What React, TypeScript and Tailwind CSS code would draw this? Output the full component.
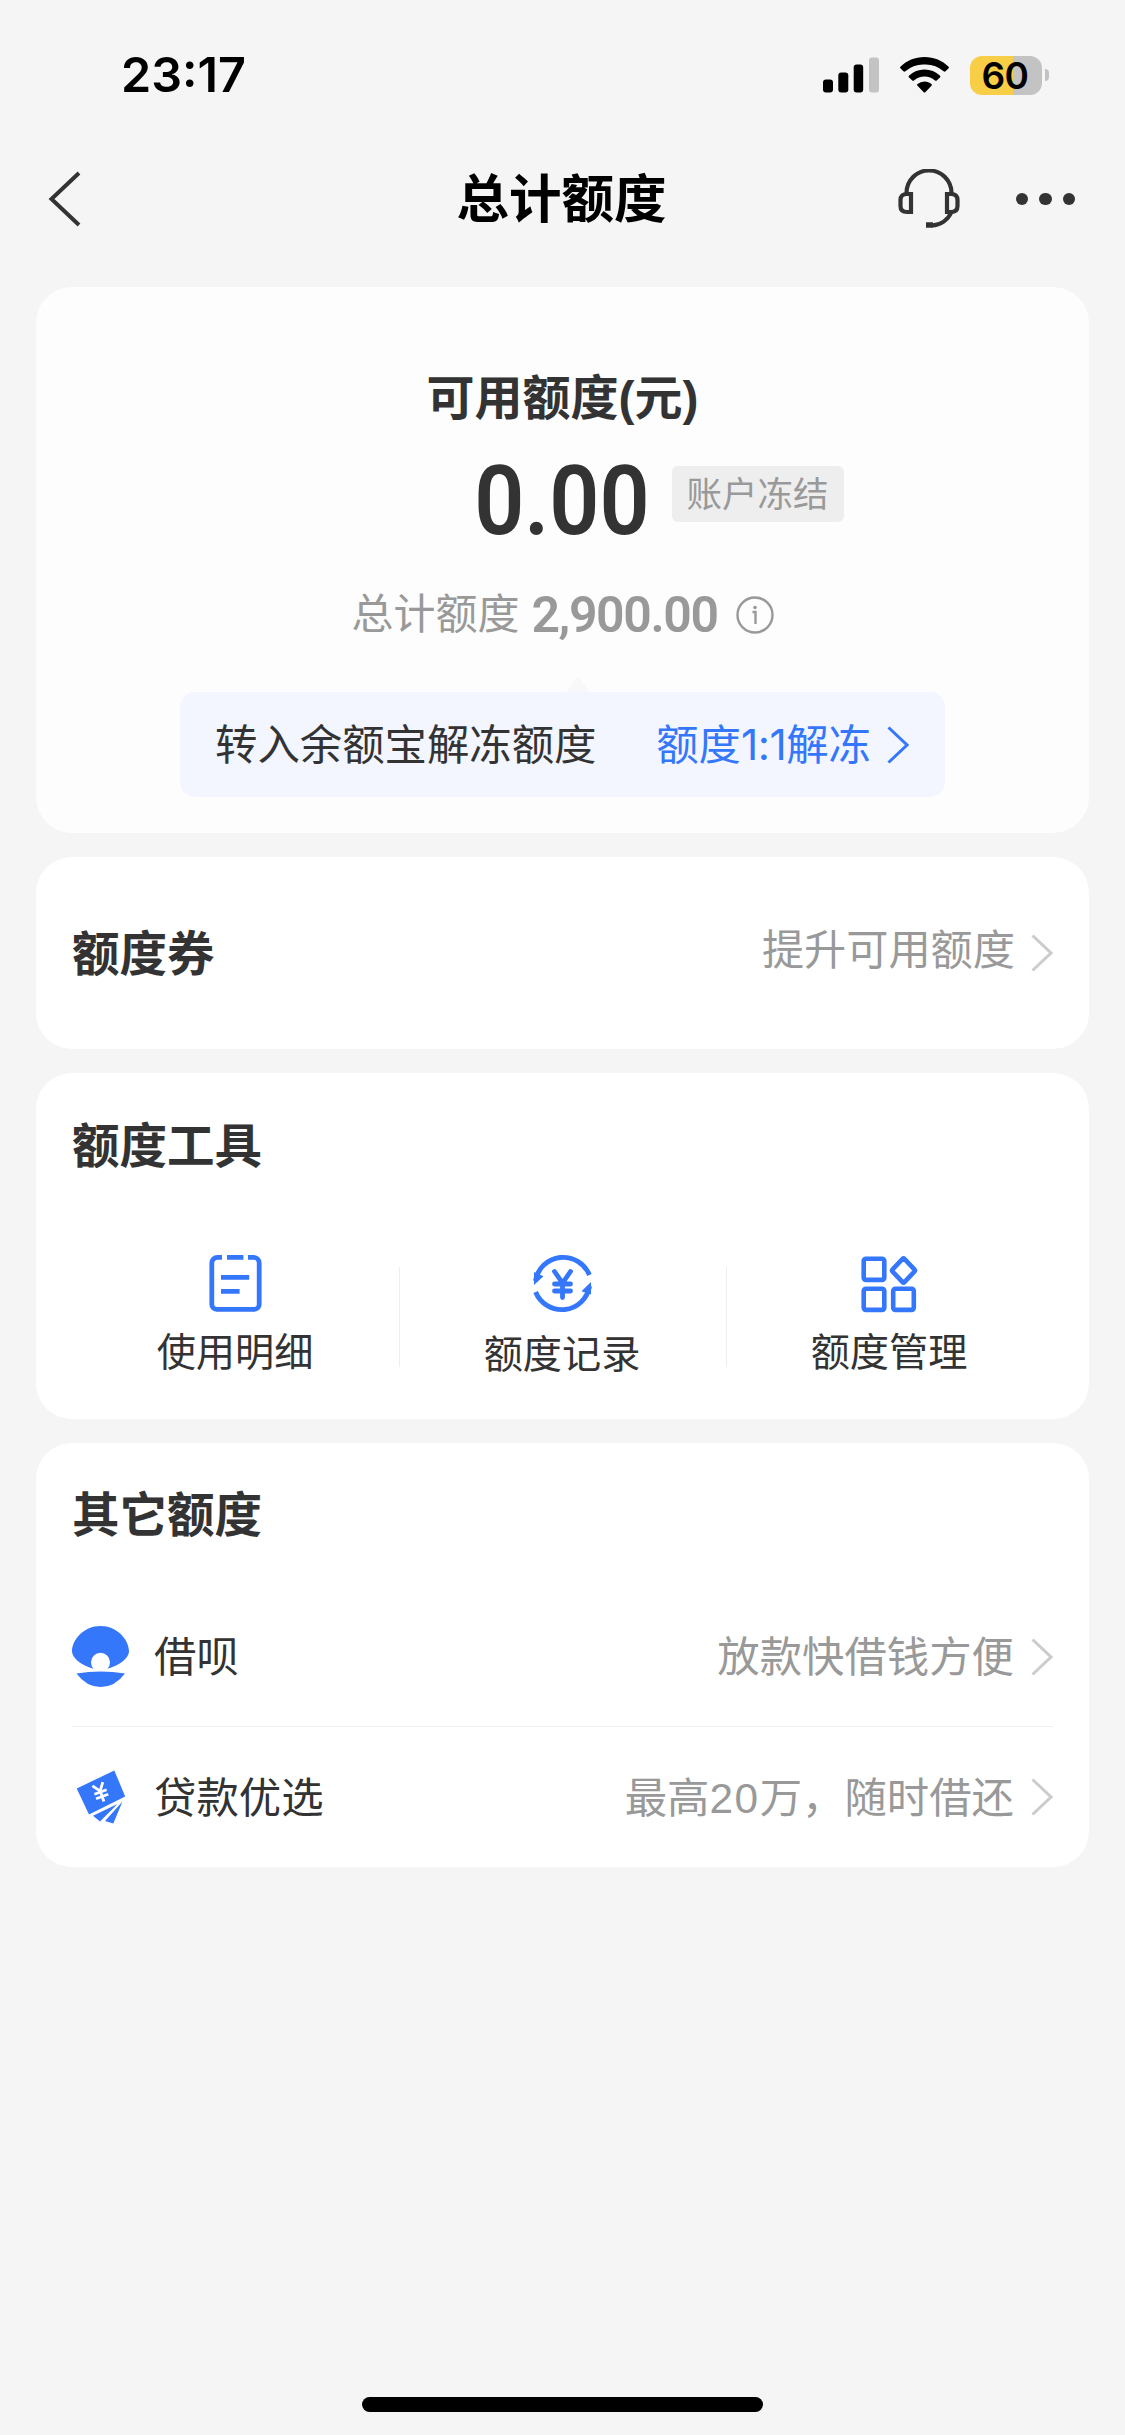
import type { ReactNode } from 'react';

type Tool = { label: string; icon: ReactNode; nudge?: string };
type Offer = { name: string; hint: ReactNode; icon: ReactNode };

const BLUE = '#3477fb';

function Chevron({ className, width = 3 }: { className: string; width?: number }) {
  return (
    <svg viewBox="0 0 22 38" className={`h-[38px] w-[22px] shrink-0 ${className}`} fill="none" stroke="currentColor" strokeWidth={width}>
      <path d="M1.500 1.500 20 19 1.500 36.500" />
    </svg>
  );
}

function BillIcon() {
  return (
    <svg viewBox="0 0 60 64" className="mr-0.5 h-16 w-15" fill="none" stroke={BLUE} strokeWidth="4.8">
      <path d="M17 7.300h-4.500a5.700 5.700 0 0 0-5.700 5.700v41.500a4.800 4.800 0 0 0 4.800 4.800h37.800a4.800 4.800 0 0 0 4.800-4.800V13a5.700 5.700 0 0 0-5.700-5.700H43" />
      <path d="M22 7.300h16.400M16 27.300h28.200M16 41.300h18.600" />
    </svg>
  );
}

function RecordIcon() {
  return (
    <svg viewBox="0 0 60 64" className="mr-0.5 h-16 w-15" fill="none" stroke={BLUE} strokeWidth="4.8">
      <path d="M3.400 31A28.200 28.200 0 0 1 57.400 25" />
      <path d="M57.600 36A28.200 28.200 0 0 1 3.600 42" />
      <path d="M2 35V22l9.500 4.200zM59 32v12.500l-9.500-3.200z" fill={BLUE} stroke="none" />
      <path d="M22.500 21.500 30.500 33l8-11.500M30.500 33v14.500M22.500 34h16M22.500 41h16" strokeLinecap="round" />
    </svg>
  );
}

function GridIcon() {
  return (
    <svg viewBox="0 0 60 64" className="mr-0.5 h-16 w-15" fill="none" stroke={BLUE} strokeWidth="4.600" strokeLinejoin="round">
      <rect x="4.700" y="8.700" width="20.600" height="21.200" rx="2.200" />
      <rect x="4.700" y="38.700" width="20.600" height="21.200" rx="2.200" />
      <rect x="34.200" y="38.700" width="20.600" height="21.200" rx="2.200" />
      <path d="M43.600 8.800q.9-1 1.800 0l10.200 10.800q.9.900 0 1.800L45.400 32.200q-.9 1-1.800 0L33.400 21.400q-.9-.9 0-1.800z" />
    </svg>
  );
}

function ShellIcon() {
  return (
    <svg viewBox="0 0 57 61" className="h-[61px] w-[57px]" fill={BLUE}>
      <path d="M28.500 0C45 0 57 13.500 57 25.500c0 6-9 14-21.500 17.200A9.500 9.500 0 1 0 21.500 42.700C9 39.500 0 31.500 0 25.500 0 13.500 12 0 28.500 0z" />
      <path d="M4.500 47.500q24-4 48.500 0Q43 61 28.700 61T4.500 47.500z" />
    </svg>
  );
}

function LoanIcon() {
  return (
    <svg viewBox="0 0 57 61" className="h-[61px] w-[57px]" fill={BLUE}>
      <path d="M4.700 21.500 42.300 3.500 53.200 29.500 17 47.500z" />
      <path d="M21 48.800 45.500 37 28 54.500zM33 54 50.500 34.500 41.300 56.500z" />
      <g transform="rotate(-20 28.500 25)" fill="none" stroke="#fff" strokeWidth="2.800">
        <path d="M23 16.500 28.500 24l5.500-7.500M28.500 24v11M22 25h13M22 29.800h13" />
      </g>
    </svg>
  );
}

const tools: Tool[] = [
  { label: '使用明细', icon: <BillIcon /> },
  { label: '额度记录', icon: <RecordIcon />, nudge: 'pt-0.5' },
  { label: '额度管理', icon: <GridIcon /> },
];

const offers: Offer[] = [
  { name: '借呗', hint: '放款快借钱方便', icon: <ShellIcon /> },
  {
    name: '贷款优选',
    hint: (
      <>
        最高<span className="tracking-[1.500px]">20</span>万，随时借还
      </>
    ),
    icon: <LoanIcon />,
  },
];

function StatusBar() {
  return (
    <div className="flex h-[150px] items-center justify-between pr-[76px] pl-[121px] font-['Inter'] text-black">
      <span className="text-[48.500px] leading-none font-semibold">23:17</span>
      <div className="flex items-center">
        <svg viewBox="0 0 56 36" className="h-9 w-14">
          <rect x="0" y="22.500" width="10" height="13" rx="3" />
          <rect x="15.300" y="15.500" width="10" height="20" rx="3" />
          <rect x="30.700" y="7.500" width="9.500" height="28" rx="3" />
          <rect x="46" y="0.500" width="10" height="35" rx="3" fill="#c3c3c3" />
        </svg>
        <svg viewBox="0 0 49 36" className="ml-[21px] h-9 w-[49px]">
          <path d="M24.500 0C34 0 42.500 3.600 48.300 9.500c.8.800.8 1.300.1 2l-2.800 2.800c-.7.700-1.300.6-2 0A27 27 0 0 0 24.500 7.500 27 27 0 0 0 5.400 14.300c-.7.600-1.300.7-2 0L.6 11.500c-.7-.7-.7-1.200.1-2C6.500 3.600 15 0 24.500 0z" />
          <path d="M24.500 12.500c6 0 11.300 2.200 15.300 6 .8.700.8 1.300.1 2L37 23.300c-.7.700-1.300.7-2 .1A16 16 0 0 0 24.500 19.500 16 16 0 0 0 14 23.400c-.7.600-1.300.6-2-.1l-2.900-2.800c-.7-.7-.7-1.300.1-2 4-3.800 9.300-6 15.300-6z" />
          <path d="M24.500 24.500c2.700 0 5 .9 6.900 2.500.7.600.7 1.100.1 1.800l-6 6.200c-.7.700-1.300.7-2 0l-6-6.200c-.6-.7-.6-1.200.1-1.800a10.500 10.500 0 0 1 6.900-2.500z" />
        </svg>
        <div className="ml-[21px] flex h-[39px] w-[72px] items-center justify-center rounded-[12px] bg-linear-to-r from-[#f7ce46] from-60% to-[#c3c3c3] to-60% pr-0.5 text-[37px] leading-none font-semibold tracking-[-0.5px]">
          60
        </div>
        <div className="ml-[3px] h-3 w-1 rounded-r-full bg-[#c3c3c3]" />
      </div>
    </div>
  );
}

function NavBar() {
  return (
    <header className="grid h-[98px] grid-cols-3 items-center pr-[50px] pl-12 text-[#333]">
      <svg viewBox="0 0 34 56" className="h-14 w-[34px]" fill="none" stroke="currentColor" strokeWidth="4">
        <path d="M31 2 3.500 28 31 54" />
      </svg>
      <h1 className="pt-[3px] text-center text-[52.500px] leading-none font-bold whitespace-nowrap text-black">总计额度</h1>
      <div className="flex items-center justify-end">
        <svg viewBox="0 0 62 60" className="h-15 w-[62px]" fill="none" stroke="currentColor" strokeWidth="4.200">
          <path d="M8.500 24a22.500 22.500 0 0 1 45 0" />
          <path d="M13 25H9q-6.500 0-6.500 6v6q0 6 6.500 6h4zM49 25h4q6.500 0 6.500 6v6q0 6-6.500 6h-4z" />
          <path d="M53.500 43A23 23 0 0 1 34 56.500" />
          <path d="M28 56h7" strokeWidth="5.500" />
        </svg>
        <div className="ml-14 flex gap-[11px]">
          <i className="size-[12.500px] rounded-full bg-current" />
          <i className="size-[12.500px] rounded-full bg-current" />
          <i className="size-[12.500px] rounded-full bg-current" />
        </div>
      </div>
    </header>
  );
}

function QuotaCard() {
  return (
    <section className="mt-[39px] flex h-[546px] flex-col items-center rounded-[36px] bg-[#fdfdfd]">
      <h2 className="mt-[87px] text-[48px] leading-[50px] font-bold">可用额度(元)</h2>
      <div className="relative mt-7 mr-0.5 flex h-[98px] items-center justify-center">
        <span className="scale-x-[0.905] font-['Roboto'] text-[97px] leading-none font-semibold">0.00</span>
        <span className="absolute top-[14px] left-full ml-3.5 flex h-14 w-[172px] items-center justify-center rounded-md bg-[#eee] pt-[3px] pr-0.5 text-[35.500px] leading-none whitespace-nowrap text-[#999]">
          账户冻结
        </span>
      </div>
      <div className="mt-[40px] flex h-[50px] items-center text-[#999]">
        <span className="text-[42px] leading-none">总计额度</span>
        <span className="ml-3 font-['Roboto'] text-[50px] leading-none font-semibold tracking-[-1.400px]">2,900.00</span>
        <svg viewBox="0 0 38 38" className="ml-[18px] size-[38px]" fill="none" stroke="currentColor" strokeWidth="2.400">
          <circle cx="19" cy="19" r="17.500" />
          <path d="M16.500 16h3v12" />
          <circle cx="19" cy="11.500" r="1.800" fill="currentColor" stroke="none" />
        </svg>
      </div>
      <svg viewBox="0 0 24 15" className="mt-[37px] ml-[30px] h-[15px] w-6" fill="#f8f8f8">
        <path d="M0 15Q3 12 8 4q4-7 8 0 5 8 8 11z" />
      </svg>
      <div className="flex h-[105px] w-[765px] items-center justify-between rounded-[15px] bg-[#f3f6ff] pr-9 pl-[35px] text-[42.400px] leading-none">
        <span className="pt-[3px]">转入余额宝解冻额度</span>
        <span className="flex items-center text-[#3477fb]">
          <span className="pt-[3px]">
            额度<span className="font-['Inter'] tracking-[-0.500px]">1:1</span>解冻
          </span>
          <Chevron className="ml-4" />
        </span>
      </div>
    </section>
  );
}

export default function App() {
  return (
    <main className="flex h-[2435px] w-[1125px] flex-col bg-[#f5f5f5] font-['Liberation_Sans','Noto_Sans_CJK_SC',sans-serif] text-[#333]">
      <StatusBar />
      <NavBar />

      <div className="flex flex-col gap-6 px-9">
        <QuotaCard />

        {/* Coupons */}
        <section className="flex h-48 items-center justify-between rounded-[36px] bg-white px-9">
          <h2 className="pt-[3px] text-[47.500px] leading-none font-bold">额度券</h2>
          <div className="flex items-center text-[42.200px] leading-none text-[#999]">
            <span className="pb-1">提升可用额度</span>
            <Chevron className="ml-4 text-[#ccc]" />
          </div>
        </section>

        {/* Tools */}
        <section className="h-[346px] rounded-[36px] bg-white px-9 pt-[50px]">
          <h2 className="text-[47.500px] leading-[48px] font-bold">额度工具</h2>
          <div className="mt-[79px] grid grid-cols-3">
            {tools.map((tool, i) => (
              <div key={tool.label} className="relative flex flex-col items-center">
                {tool.icon}
                <span className={`mt-4 mr-px text-[39.200px] leading-[46px] ${tool.nudge ?? ''}`}>{tool.label}</span>
                {i > 0 && <div className="absolute top-[17px] left-0 h-[100px] w-px bg-[#eee]" />}
              </div>
            ))}
          </div>
        </section>

        {/* Other quotas */}
        <section className="h-[424px] rounded-[36px] bg-white px-9 pt-[49px]">
          <h2 className="text-[47.500px] leading-[48px] font-bold">其它额度</h2>
          <div className="mt-[47px] divide-y divide-[#eee]">
            {offers.map((offer) => (
              <div key={offer.name} className="flex h-[140px] items-center text-[42.400px] leading-none">
                {offer.icon}
                <span className="ml-[25px] flex-1 pt-1">{offer.name}</span>
                <span className="pt-1 text-[#999]">{offer.hint}</span>
                <Chevron className="ml-[17px] text-[#ccc]" />
              </div>
            ))}
          </div>
        </section>
      </div>

      {/* Home indicator */}
      <div className="mx-auto mt-auto mb-[23px] h-[15px] w-[401px] rounded-full bg-black" />
    </main>
  );
}
